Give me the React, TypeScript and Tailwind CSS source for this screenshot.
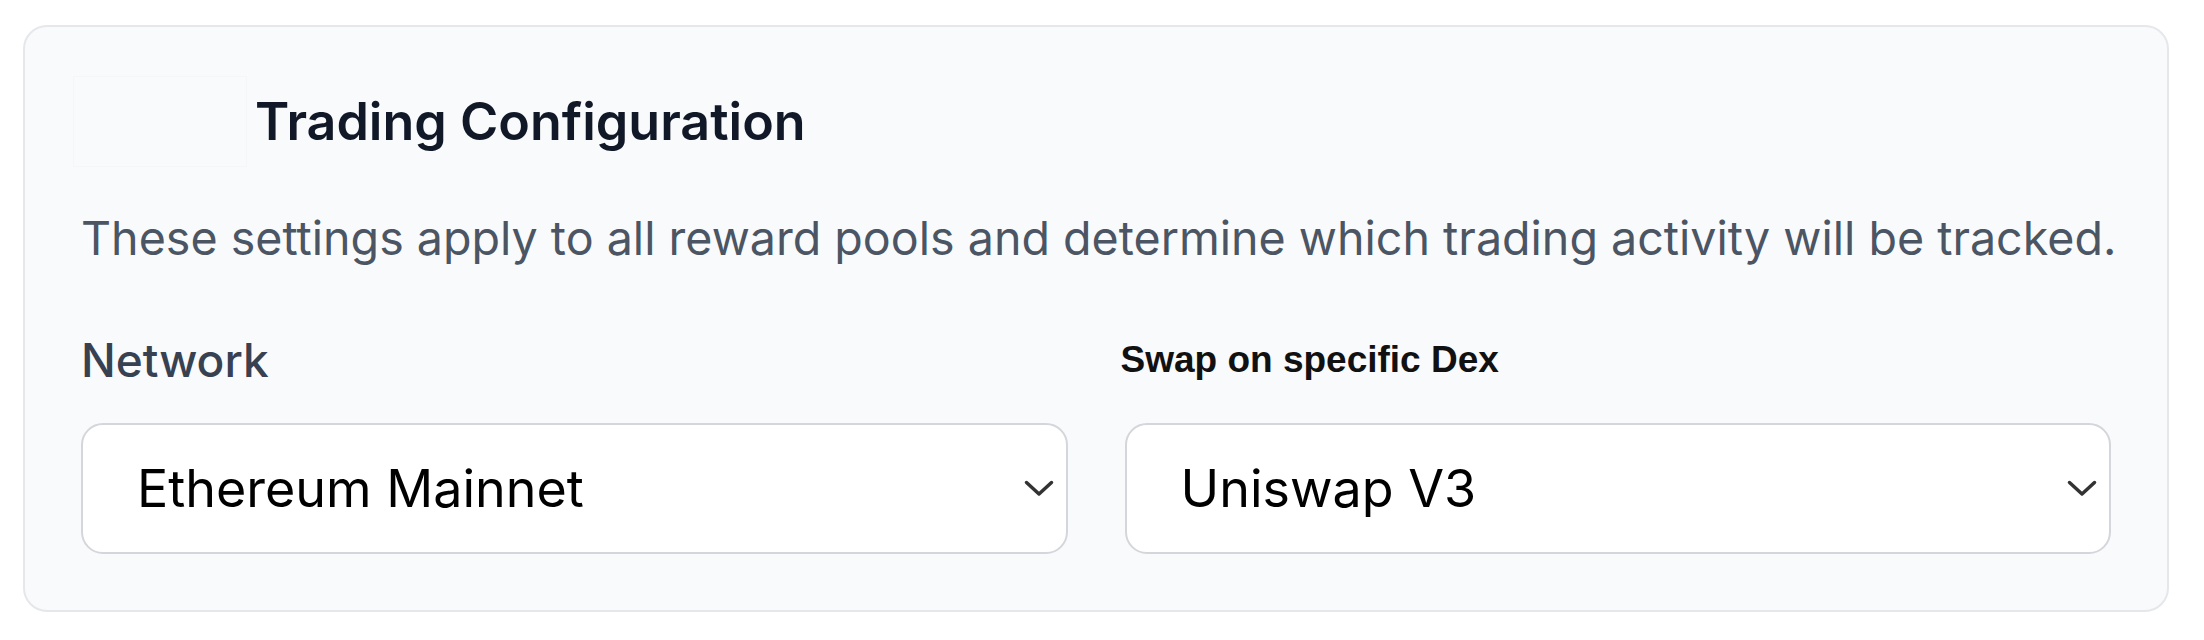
import React from "react";

const Chevron = () => (
    <svg width="30" height="17" viewBox="0 0 30 17" fill="none" className="shrink-0">
        <path d="M2.5 2.5 L15 14 L27.5 2.5" stroke="#333333" strokeWidth="3.5" strokeLinecap="round" strokeLinejoin="round" />
    </svg>
);

const SelectBox = ({ value }: { value: string }) => (
    <div className="flex items-center justify-between h-[131px] bg-white border-2 border-[#d4d6db] rounded-[22px] pl-[54px] pr-[12px]">
        <span className="text-[52px] leading-none text-black font-['Inter',sans-serif]">{value}</span>
        <Chevron />
    </div>
);

export default function App() {
    return (
        <div className="w-[2204px] h-[640px] bg-white pt-[25px] pl-[23px] pr-[35px]">
            <div className="bg-[#f9fafb] border-2 border-[#e5e7eb] rounded-[24px] px-[56px] pt-[49px] pb-[56px]">
                <div className="flex items-center gap-[8px]">
                    <div className="w-[174px] h-[91px] -ml-[8px] border border-[#f5f6f8]" />
                    <h2 className="text-[52px] leading-none font-semibold text-[#111827] font-['Inter',sans-serif]">
                        Trading Configuration
                    </h2>
                </div>
                <p className="mt-[41px] text-[46.6px] leading-[60px] text-[#4b5563] whitespace-nowrap font-['Inter',sans-serif]">
                    These settings apply to all reward pools and determine which trading activity will be tracked.
                </p>
                <div className="mt-[64px] grid grid-cols-2 gap-[57px]">
                    <div className="flex flex-col">
                        <label className="text-[46px] leading-[56px] font-medium text-[#374151] font-['Inter',sans-serif]">
                            Network
                        </label>
                        <div className="mt-[35px]">
                            <SelectBox value="Ethereum Mainnet" />
                        </div>
                    </div>
                    <div className="flex flex-col">
                        <label className="-ml-[4px] text-[37px] leading-[56px] font-bold text-[#111111] font-['Liberation_Sans',Arial,sans-serif]">
                            Swap on specific Dex
                        </label>
                        <div className="mt-[35px]">
                            <SelectBox value="Uniswap V3" />
                        </div>
                    </div>
                </div>
            </div>
        </div>
    );
}
